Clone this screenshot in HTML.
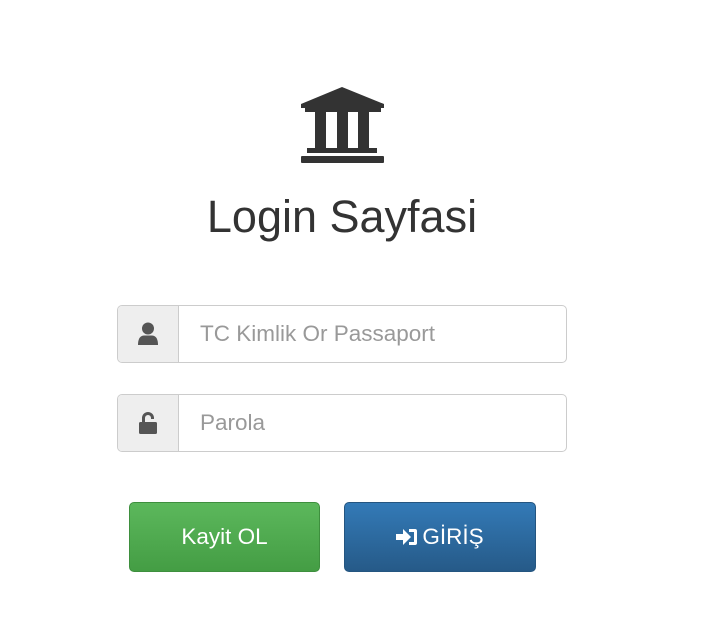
<!DOCTYPE html>
<html><head><style>
body{margin:0;width:713px;height:632px;background:#fff;font-family:"Liberation Sans",sans-serif;position:relative;overflow:hidden}
.t{position:absolute;left:0;width:684px;text-align:center;top:191px;font-size:45px;color:#333}
.ig{position:absolute;left:117px;width:448px;height:56px;border:1px solid #ccc;border-radius:5px;overflow:hidden}
.ad{position:absolute;left:0;top:0;width:60px;height:56px;background:#eee;border-right:1px solid #ccc}
.ad svg{position:absolute;left:19px;top:16px}
.ph{position:absolute;left:82px;top:15px;font-size:22.5px;color:#999}
.b{position:absolute;top:502px;height:68px;border-radius:5px;color:#fff;font-size:22.5px;text-align:center;line-height:68px}
</style></head><body>
<svg style="position:absolute;left:300px;top:86px" width="86" height="78" viewBox="0 0 86 78">
<path d="M42 1 L84 18 L84 22 L1 22 L1 18 Z" fill="#333"/>
<rect x="5" y="21" width="76" height="5" fill="#333"/>
<rect x="15" y="26" width="11" height="37" fill="#333"/>
<rect x="37" y="26" width="11" height="37" fill="#333"/>
<rect x="58" y="26" width="11" height="37" fill="#333"/>
<rect x="7" y="62" width="70" height="5" fill="#333"/>
<rect x="1" y="70" width="83" height="7" rx="1" fill="#333"/>
</svg>
<div class="t">Login Sayfasi</div>
<div class="ig" style="top:305px"><div class="ad"><svg width="22" height="24" viewBox="0 0 22 24"><circle cx="11" cy="6.5" r="6" fill="#555"/><path d="M1 23 Q1 13 8 13.5 L14 13.5 Q21 13 21 23 Z" fill="#555"/></svg></div><div class="ph">TC Kimlik Or Passaport</div></div>
<div class="ig" style="top:394px"><div class="ad"><svg width="22" height="24" viewBox="0 0 22 24"><path d="M5 11 V7 a6 6 0 0 1 12 0 V8 h-3 V7 a3 3 0 0 0 -6 0 V11" fill="#555"/><rect x="2" y="11" width="18" height="12" rx="1.5" fill="#555"/></svg></div><div class="ph">Parola</div></div>
<div class="b" style="left:129px;width:189px;background:linear-gradient(#5cb85c,#449d44);border:1px solid #3e8f3e">Kayit OL</div>
<div class="b" style="left:344px;width:190px;background:linear-gradient(#337ab7,#265a88);border:1px solid #245580"><svg width="22" height="18" viewBox="0 0 22 18" style="vertical-align:-2px;margin-right:4px"><path d="M0 6 h7 V1 l8 8 -8 8 v-5 H0 Z" fill="#fff"/><path d="M13 1 h6 a2 2 0 0 1 2 2 v12 a2 2 0 0 1 -2 2 h-6 v-3 h5 V4 h-5 Z" fill="#fff"/></svg>GİRİŞ</div>
</body></html>
